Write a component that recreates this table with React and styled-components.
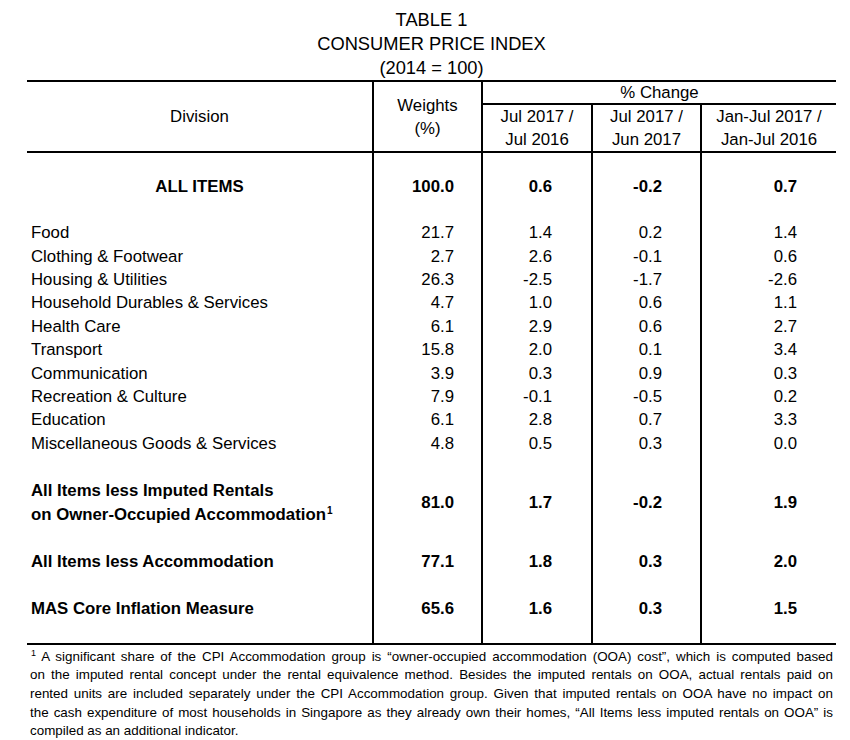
import React from "react";
import styled, { createGlobalStyle } from "styled-components";

//
// Global
//
const GlobalStyle = createGlobalStyle`
    * { box-sizing: border-box; }
    body {
        margin: 0;
        background: #fff;
        color: #000;
        font-family: "Liberation Sans", Arial, sans-serif;
    }
`;

//
// Component Styles
//
const Page = styled.div`
    width: 836px;
    padding: 8px 0 0 27px;
`;

const Title = styled.div`
    text-align: center;
    font-size: 18.3px;
    line-height: 24px;
`;

const Table = styled.div`
    display: grid;
    grid-template-columns: 345px 109px 110px 109px 136px;
    border-top: 2px solid #000;
    border-bottom: 2px solid #000;
    font-size: 16.8px;
`;

const HeadCell = styled.div`
    display: flex;
    flex-direction: column;
    align-items: center;
    justify-content: center;
    text-align: center;
    line-height: 23px;
    border-left: ${(p) => (p.$first ? "none" : "2px solid #000")};
    border-bottom: 2px solid #000;
    grid-row: ${(p) => p.$row || "auto"};
    grid-column: ${(p) => p.$col || "auto"};
    height: ${(p) => (p.$h ? `${p.$h}px` : "auto")};
    padding-top: ${(p) => p.$pt || 0}px;
`;

const Cell = styled.div`
    height: ${(p) => p.$h}px;
    display: flex;
    flex-direction: column;
    justify-content: center;
    align-items: ${(p) =>
        p.$align === "left" ? "flex-start" : p.$align === "center" ? "center" : "flex-end"};
    line-height: 23.4px;
    padding: 1px ${(p) => p.$pr || 0}px 0 ${(p) => p.$pl || 0}px;
    border-left: ${(p) => (p.$first ? "none" : "2px solid #000")};
    font-weight: ${(p) => (p.$bold ? 700 : 400)};
    white-space: nowrap;
`;

const Sup = styled.sup`
    font-size: 10px;
    line-height: 0;
    vertical-align: 6px;
    margin-left: 1px;
`;

const Footnote = styled.div`
    padding: 3px 3px 0 3px;
    font-size: 13.4px;
    line-height: 18.7px;
`;

const NoteLine = styled.span`
    display: block;
    text-align: justify;
    text-align-last: ${(p) => (p.$last ? "left" : "justify")};
`;

const NoteMark = styled.sup`
    font-size: 9px;
    line-height: 0;
    vertical-align: 5px;
    margin-left: 1px;
`;

//
// Data
//
const PAD = [0, 27, 39, 38, 39];

const divisions = [
    ["Food", "21.7", "1.4", "0.2", "1.4"],
    ["Clothing & Footwear", "2.7", "2.6", "-0.1", "0.6"],
    ["Housing & Utilities", "26.3", "-2.5", "-1.7", "-2.6"],
    ["Household Durables & Services", "4.7", "1.0", "0.6", "1.1"],
    ["Health Care", "6.1", "2.9", "0.6", "2.7"],
    ["Transport", "15.8", "2.0", "0.1", "3.4"],
    ["Communication", "3.9", "0.3", "0.9", "0.3"],
    ["Recreation & Culture", "7.9", "-0.1", "-0.5", "0.2"],
    ["Education", "6.1", "2.8", "0.7", "3.3"],
    ["Miscellaneous Goods & Services", "4.8", "0.5", "0.3", "0.0"],
];

const noteLines = [
    "A significant share of the CPI Accommodation group is \u201cowner-occupied accommodation (OOA) cost\u201d, which is computed based",
    "on the imputed rental concept under the rental equivalence method. Besides the imputed rentals on OOA, actual rentals paid on",
    "rented units are included separately under the CPI Accommodation group. Given that imputed rentals on OOA have no impact on",
    "the cash expenditure of most households in Singapore as they already own their homes, \u201cAll Items less imputed rentals on OOA\u201d is",
    "compiled as an additional indicator.",
];

//
// Row helpers
//
const Spacer = ({ h }) => (
    <>
        {[0, 1, 2, 3, 4].map((i) => (
            <Cell key={i} $h={h} $first={i === 0} />
        ))}
    </>
);

const Row = ({ label, values, bold, center, h = 23.4 }) => (
    <>
        <Cell $h={h} $first $bold={bold} $align={center ? "center" : "left"} $pl={center ? 0 : 4}>
            {label}
        </Cell>
        {values.map((v, i) => (
            <Cell key={i} $h={h} $bold={bold} $pr={PAD[i + 1]}>
                {v}
            </Cell>
        ))}
    </>
);

const App = () => {
    return (
        <Page>
            <GlobalStyle />

            <Title>
                TABLE 1
                <br />
                CONSUMER PRICE INDEX
                <br />
                (2014 = 100)
            </Title>

            <Table>
                {/* Header */}
                <HeadCell $first $row="1 / span 2" $col="1">
                    Division
                </HeadCell>
                <HeadCell $row="1 / span 2" $col="2">
                    <span>Weights</span>
                    <span>(%)</span>
                </HeadCell>
                <HeadCell $row="1" $col="3 / span 3" $h={23}>
                    % Change
                </HeadCell>
                <HeadCell $row="2" $col="3" $h={48}>
                    <span>Jul 2017 /</span>
                    <span>Jul 2016</span>
                </HeadCell>
                <HeadCell $row="2" $col="4" $h={48}>
                    <span>Jul 2017 /</span>
                    <span>Jun 2017</span>
                </HeadCell>
                <HeadCell $row="2" $col="5" $h={48}>
                    <span>Jan-Jul 2017 /</span>
                    <span>Jan-Jul 2016</span>
                </HeadCell>

                {/* Body */}
                <Spacer h={21} />
                <Row label="ALL ITEMS" values={["100.0", "0.6", "-0.2", "0.7"]} bold center />
                <Spacer h={23.4} />
                {divisions.map(([label, ...values]) => (
                    <Row key={label} label={label} values={values} />
                ))}
                <Spacer h={24} />
                <Row
                    h={46.8}
                    bold
                    label={
                        <>
                            <span>All Items less Imputed Rentals</span>
                            <span>
                                on Owner-Occupied Accommodation<Sup>1</Sup>
                            </span>
                        </>
                    }
                    values={["81.0", "1.7", "-0.2", "1.9"]}
                />
                <Spacer h={24.5} />
                <Row label="All Items less Accommodation" values={["77.1", "1.8", "0.3", "2.0"]} bold />
                <Spacer h={23.6} />
                <Row label="MAS Core Inflation Measure" values={["65.6", "1.6", "0.3", "1.5"]} bold />
                <Spacer h={22.3} />
            </Table>

            <Footnote>
                {noteLines.map((line, i) => (
                    <NoteLine key={i} $last={i === noteLines.length - 1}>
                        {i === 0 && <NoteMark>1</NoteMark>}
                        {i === 0 && " "}
                        {line}
                    </NoteLine>
                ))}
            </Footnote>
        </Page>
    );
};

export default App;
